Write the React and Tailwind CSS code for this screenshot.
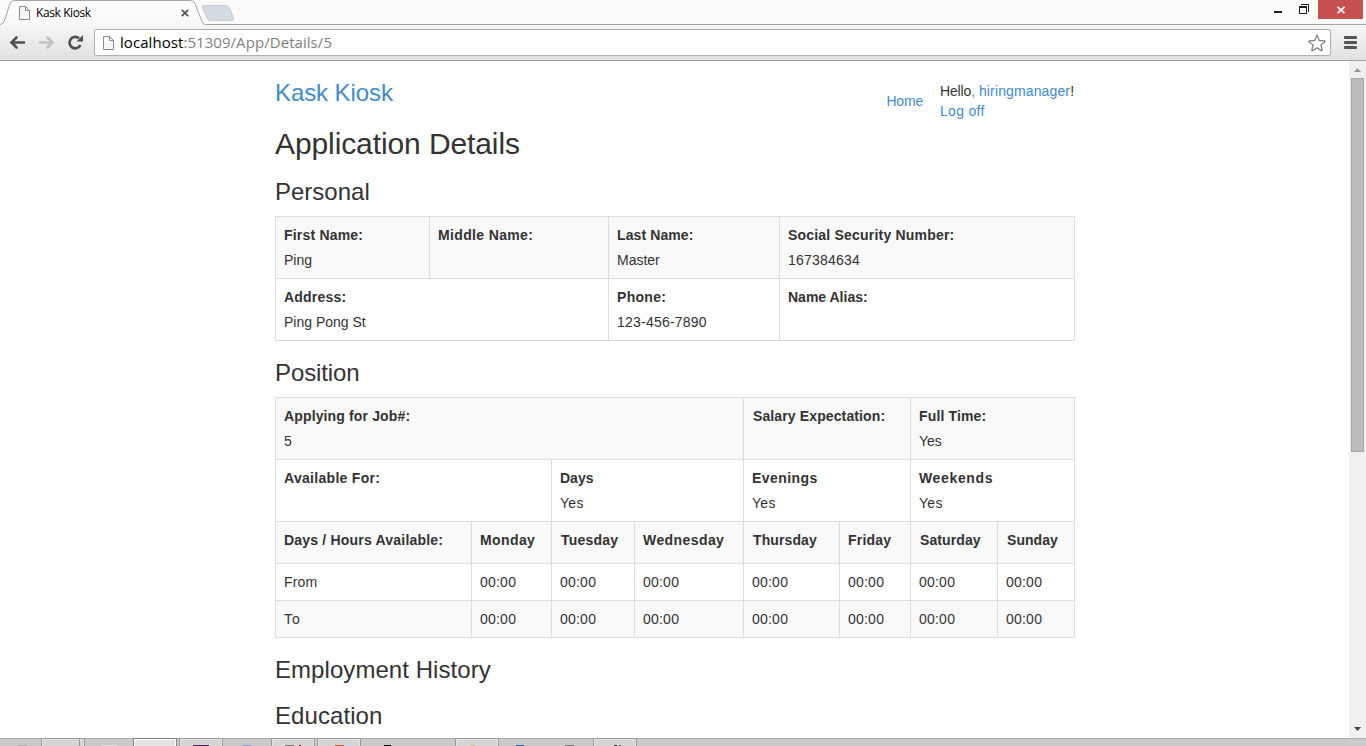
const SANS = "font-['Liberation_Sans',Arial,sans-serif]";

function PageIcon({ className }) {
  return (
    <svg className={className} viewBox="0 0 11 14" fill="none" stroke="#8c8c8c">
      <path d="M.5 .5H6.5L10.500 4.500V13.500H.5Z" fill="#f7f7f7" />
      <path d="M6.500 .5V4.500H10.500" />
    </svg>
  );
}

function TabStrip() {
  return (
    <header className="relative flex h-6 shrink-0 bg-[#fbfbfb]">
      <svg className="absolute left-0 top-0 h-[26px] w-[1366px]" viewBox="0 0 1366 26" fill="none">
        <defs>
          <linearGradient id="tab" x1="0" y1="0" x2="0" y2="1">
            <stop offset="0" stopColor="#ffffff" />
            <stop offset="1" stopColor="#f7f7f7" />
          </linearGradient>
        </defs>
        <path d="M0 24.500C3 24 4 22.500 5 19L9.500 5C10.500 2 11.500.5 15 .5H189C193 .5 194.500 2 195.500 5L201 19C202.500 23 203 24.500 207 24.500V26H0Z" fill="url(#tab)" />
        <path d="M0 24.500C3 24 4 22.500 5 19L9.500 5C10.500 2 11.500.5 15 .5H189C193 .5 194.500 2 195.500 5L201 19C202.500 23 203 24.500 207 24.500H1366" stroke="#a3a3a3" />
        <path d="M204 5.500H225C228 5.500 229 6.500 230 9L233.500 18C234.200 20 233.500 20.500 231.500 20.500H211C208 20.500 207.500 19.500 206.500 17L202.500 8C201.800 6.200 202.300 5.500 204 5.500Z" fill="#d5dbe2" stroke="#c9cdd1" />
      </svg>
      <div className="relative flex w-[200px] items-center pt-[2px] pl-[19px]">
        <PageIcon className="h-[14px] w-[11px]" />
        <span className="ml-[6px] w-[145px] text-[12px] leading-4 tracking-[-0.4px] text-black font-['Open_Sans','Noto_Sans',sans-serif]">Kask Kiosk</span>
        <svg className="h-2 w-2" viewBox="0 0 8 8" stroke="#555" strokeWidth="1.800">
          <path d="M.8 .8L7.200 7.200M7.200 .8L.8 7.200" />
        </svg>
      </div>
      <div className="relative ml-auto flex h-[19px]">
        <svg className="h-[19px] w-[45px]" viewBox="0 0 45 19" fill="none" shapeRendering="crispEdges">
          <path d="M1 11H9V13H1Z" fill="#222" />
          <path d="M26 6H34V14H26ZM27 8V13H33V8Z" fill="#222" fillRule="evenodd" />
          <path d="M28 4H36V12H35V5H28Z" fill="#222" />
        </svg>
        <div className="flex w-[45px] items-center justify-center bg-[#c75050]">
          <svg className="h-2 w-2" viewBox="0 0 8 8" stroke="#fff" strokeWidth="1.800">
            <path d="M.5 .8L7.500 7.200M7.500 .8L.5 7.200" />
          </svg>
        </div>
        <div className="w-[3px]" />
      </div>
    </header>
  );
}

function Toolbar() {
  return (
    <div className="flex h-[37px] shrink-0 items-start border-b border-[#a0a0a0] bg-linear-to-b from-[#f7f7f7] to-[#e1e1e1]">
      <svg className="h-9 w-[94px]" viewBox="0 0 94 36" fill="none" strokeLinecap="round">
        <path d="M24 18.500H12M16.500 13.500L11.500 18.500L16.500 23.500" stroke="#505050" strokeWidth="2.600" />
        <path d="M40 18.500H52M47.500 13.500L52.500 18.500L47.500 23.500" stroke="#c2c2c2" strokeWidth="2.600" />
        <path d="M79 14.300A5.700 5.700 0 1 0 80.400 21" stroke="#505050" strokeWidth="2.700" strokeLinecap="butt" />
        <path d="M83 11V17.500H76.500Z" fill="#505050" />
      </svg>
      <div className="mt-[5px] flex h-[27px] w-[1237px] items-center rounded-[2px] border border-[#b0b0b0] bg-white pl-2 pr-1">
        <PageIcon className="h-[14px] w-[11px]" />
        <span className="-mt-[2px] ml-[6px] text-[15px] leading-5 tracking-[0.06px] text-[#7f7f7f] font-['Open_Sans','Noto_Sans',sans-serif]">
          <span className="text-black">localhost</span>:51309/App/Details/5
        </span>
        <svg className="ml-auto h-[18px] w-[18px]" viewBox="0 0 18 18" fill="none" stroke="#858585" strokeWidth="1.300" strokeLinejoin="round">
          <path d="M9 1L11.200 6.500L16.900 6.900Q17.400 7.300 16.900 7.800L12.900 11L14.200 16.200Q14 16.900 13.300 16.600L9 13.900L4.700 16.600Q4 16.900 3.800 16.200L5.100 11L1.100 7.800Q.6 7.300 1.100 6.900L6.800 6.500Z" />
        </svg>
      </div>
      <div className="ml-[13px] mt-[12px] flex flex-col gap-[2px]">
        <div className="h-[3px] w-[13px] rounded-[1px] bg-[#555]" />
        <div className="h-[3px] w-[13px] rounded-[1px] bg-[#555]" />
        <div className="h-[3px] w-[13px] rounded-[1px] bg-[#555]" />
      </div>
    </div>
  );
}

function Cell({ label, value, className = "", labelClass = "tracking-[0.2px]", valueClass = "" }) {
  return (
    <div className={`border-l border-t border-[#ddd] pl-2 pt-2 leading-5 whitespace-nowrap ${className}`}>
      {label && <div className={`mb-[5px] font-bold ${labelClass}`}>{label}</div>}
      {value && <div className={valueClass}>{value}</div>}
    </div>
  );
}

const DIGITS = "tracking-[0.22px]";
const DAYS = [
  ["Monday", "tracking-[0.4px]"],
  ["Tuesday", "pl-px tracking-[0.2px]"],
  ["Wednesday", "tracking-[0.42px]"],
  ["Thursday", "pl-px tracking-[0.1px]"],
  ["Friday", "tracking-[0.2px]"],
  ["Saturday", "pl-px tracking-[0.1px]"],
  ["Sunday", "pl-px tracking-[0.05px]"],
];

function Scrollbar() {
  return (
    <div className="flex w-[17px] shrink-0 flex-col items-center bg-[#f0f0f0]">
      <svg className="h-[17px] w-[17px] shrink-0" viewBox="0 0 17 17">
        <path d="M5 11L8.500 7L12 11Z" fill="#9a9a9a" />
      </svg>
      <div className="h-[374px] w-[13px] border border-[#a6a6a6] bg-[#bcbcbc]" />
      <svg className="mt-auto h-[17px] w-[17px] shrink-0" viewBox="0 0 17 17">
        <path d="M5 6H12L8.500 10Z" fill="#444" />
      </svg>
    </div>
  );
}

function Taskbar() {
  return (
    <svg className="block h-2 w-[1366px] shrink-0" viewBox="0 0 1366 8" shapeRendering="crispEdges">
      <rect width="1366" height="8" fill="#cacaca" />
      <rect width="1366" height="1" fill="#b0b0b0" />
      <g fill="#d5d5d5">
        {[[41, 44], [179, 44], [271, 44], [317, 44], [455, 44], [593, 44]].map(([x, w]) => (
          <g key={x}>
            <rect x={x} width={w} height="8" fill="#999" />
            <rect x={x + 1} y="1" width={w - 2} height="7" fill="#e3e3e3" />
            <rect x={x + 2} y="2" width={w - 4} height="6" />
          </g>
        ))}
      </g>
      <rect x="79" width="1" height="8" fill="#999" />
      <rect x="133" width="44" height="8" fill="#808080" />
      <rect x="134" y="1" width="42" height="7" fill="#fff" />
      <rect x="135" y="2" width="40" height="6" fill="#e4e4e4" />
      <rect x="18" y="7" width="9" height="1" fill="#aaa" />
      <rect x="101" y="7" width="16" height="1" fill="#ddd" />
      <rect x="193" y="7" width="16" height="1" fill="#492070" />
      <rect x="243" y="7" width="8" height="1" fill="#68a8d0" />
      <rect x="285" y="7" width="9" height="1" fill="#777" />
      <rect x="299" y="7" width="2" height="1" fill="#800010" />
      <rect x="335" y="7" width="9" height="1" fill="#c45a30" />
      <rect x="384" y="7" width="7" height="1" fill="#000" />
      <rect x="470" y="7" width="5" height="1" fill="#c9b98a" />
      <rect x="516" y="7" width="8" height="1" fill="#205a9c" />
      <rect x="565" y="7" width="9" height="1" fill="#777" />
      <rect x="614" y="7" width="3" height="1" fill="#222" />
      <rect x="619" y="7" width="2" height="1" fill="#555" />
    </svg>
  );
}

export default function App() {
  return (
    <div className="flex h-[746px] w-[1366px] flex-col overflow-hidden bg-white">
      <TabStrip />
      <Toolbar />
      <div className="flex h-[677px] shrink-0">
        <main className={`h-[677px] flex-1 overflow-hidden pl-[275px] text-[14px] text-[#333] ${SANS}`}>
          <div className="w-[800px]">
            <div className="flex h-[66px] justify-between pt-[18px]">
              <a className="text-[24px] leading-[28px] tracking-[-0.08px] text-[#428bca]">Kask Kiosk</a>
              <nav className="flex pt-[2px] leading-5 text-[#428bca]">
                <a className="mr-[17px] pt-[10px] tracking-[-0.2px]">Home</a>
                <div className="w-[135px] whitespace-nowrap">
                  <div><span className="tracking-[-0.15px] text-[#333]">Hello</span>, <span className="tracking-[0.13px]">hiringmanager</span><span className="text-[#333]">!</span></div>
                  <a className="tracking-[0.3px]">Log off</a>
                </div>
              </nav>
            </div>
            <h1 className="text-[30px] leading-[33px] tracking-[-0.1px]">Application Details</h1>
            <h2 className="mt-[19px] mb-[11px] text-[24px] leading-[26px]">Personal</h2>
            <section className="grid grid-cols-[154px_179px_171px_295px] grid-rows-[62px_62px] border-r border-b border-[#ddd]">
              <Cell className="bg-[#f9f9f9]" label="First Name:" value="Ping" />
              <Cell className="bg-[#f9f9f9]" label="Middle Name:" labelClass="tracking-[0.35px]" />
              <Cell className="bg-[#f9f9f9]" label="Last Name:" labelClass="tracking-[0.1px]" value="Master" />
              <Cell className="bg-[#f9f9f9]" label="Social Security Number:" value="167384634" valueClass={DIGITS} />
              <Cell className="col-span-2" label="Address:" value="Ping Pong St" />
              <Cell label="Phone:" labelClass="tracking-[0.3px]" value="123-456-7890" valueClass={DIGITS} />
              <Cell label="Name Alias:" labelClass="tracking-[0px]" />
            </section>
            <h2 className="mt-[19px] mb-[11px] text-[24px] leading-[26px] tracking-[-0.1px]">Position</h2>
            <section className="grid grid-cols-[196px_80px_83px_109px_96px_71px_87px_77px] grid-rows-[62px_62px_42px_37px_37px] border-r border-b border-[#ddd]">
              <Cell className="col-span-4 bg-[#f9f9f9]" label="Applying for Job#:" labelClass="tracking-[0.14px]" value="5" />
              <Cell className="col-span-2 bg-[#f9f9f9]" label="Salary Expectation:" labelClass="pl-px tracking-[0.12px]" />
              <Cell className="col-span-2 bg-[#f9f9f9]" label="Full Time:" labelClass="tracking-[0.15px]" value="Yes" />
              <Cell className="col-span-2" label="Available For:" labelClass="tracking-[0.3px]" />
              <Cell className="col-span-2" label="Days" labelClass="tracking-[0px]" value="Yes" valueClass="tracking-[0.3px]" />
              <Cell className="col-span-2" label="Evenings" labelClass="tracking-[0.45px]" value="Yes" valueClass="tracking-[0.3px]" />
              <Cell className="col-span-2" label="Weekends" labelClass="tracking-[0.65px]" value="Yes" valueClass="tracking-[0.3px]" />
              <Cell className="bg-[#f9f9f9]" label="Days / Hours Available:" />
              {DAYS.map(([d, c]) => <Cell key={d} className="bg-[#f9f9f9]" label={d} labelClass={c} />)}
              <Cell value="From" valueClass="tracking-[0.2px]" />
              {DAYS.map(([d]) => <Cell key={d} value="00:00" valueClass={DIGITS} />)}
              <Cell className="bg-[#f9f9f9]" value="To" valueClass="tracking-[1px]" />
              {DAYS.map(([d]) => <Cell key={d} className="bg-[#f9f9f9]" value="00:00" valueClass={DIGITS} />)}
            </section>
            <h2 className="mt-[19px] text-[24px] leading-[26px] tracking-[0.06px]">Employment History</h2>
            <h2 className="mt-5 text-[24px] leading-[26px] tracking-[0.08px]">Education</h2>
          </div>
        </main>
        <Scrollbar />
      </div>
      <Taskbar />
    </div>
  );
}
